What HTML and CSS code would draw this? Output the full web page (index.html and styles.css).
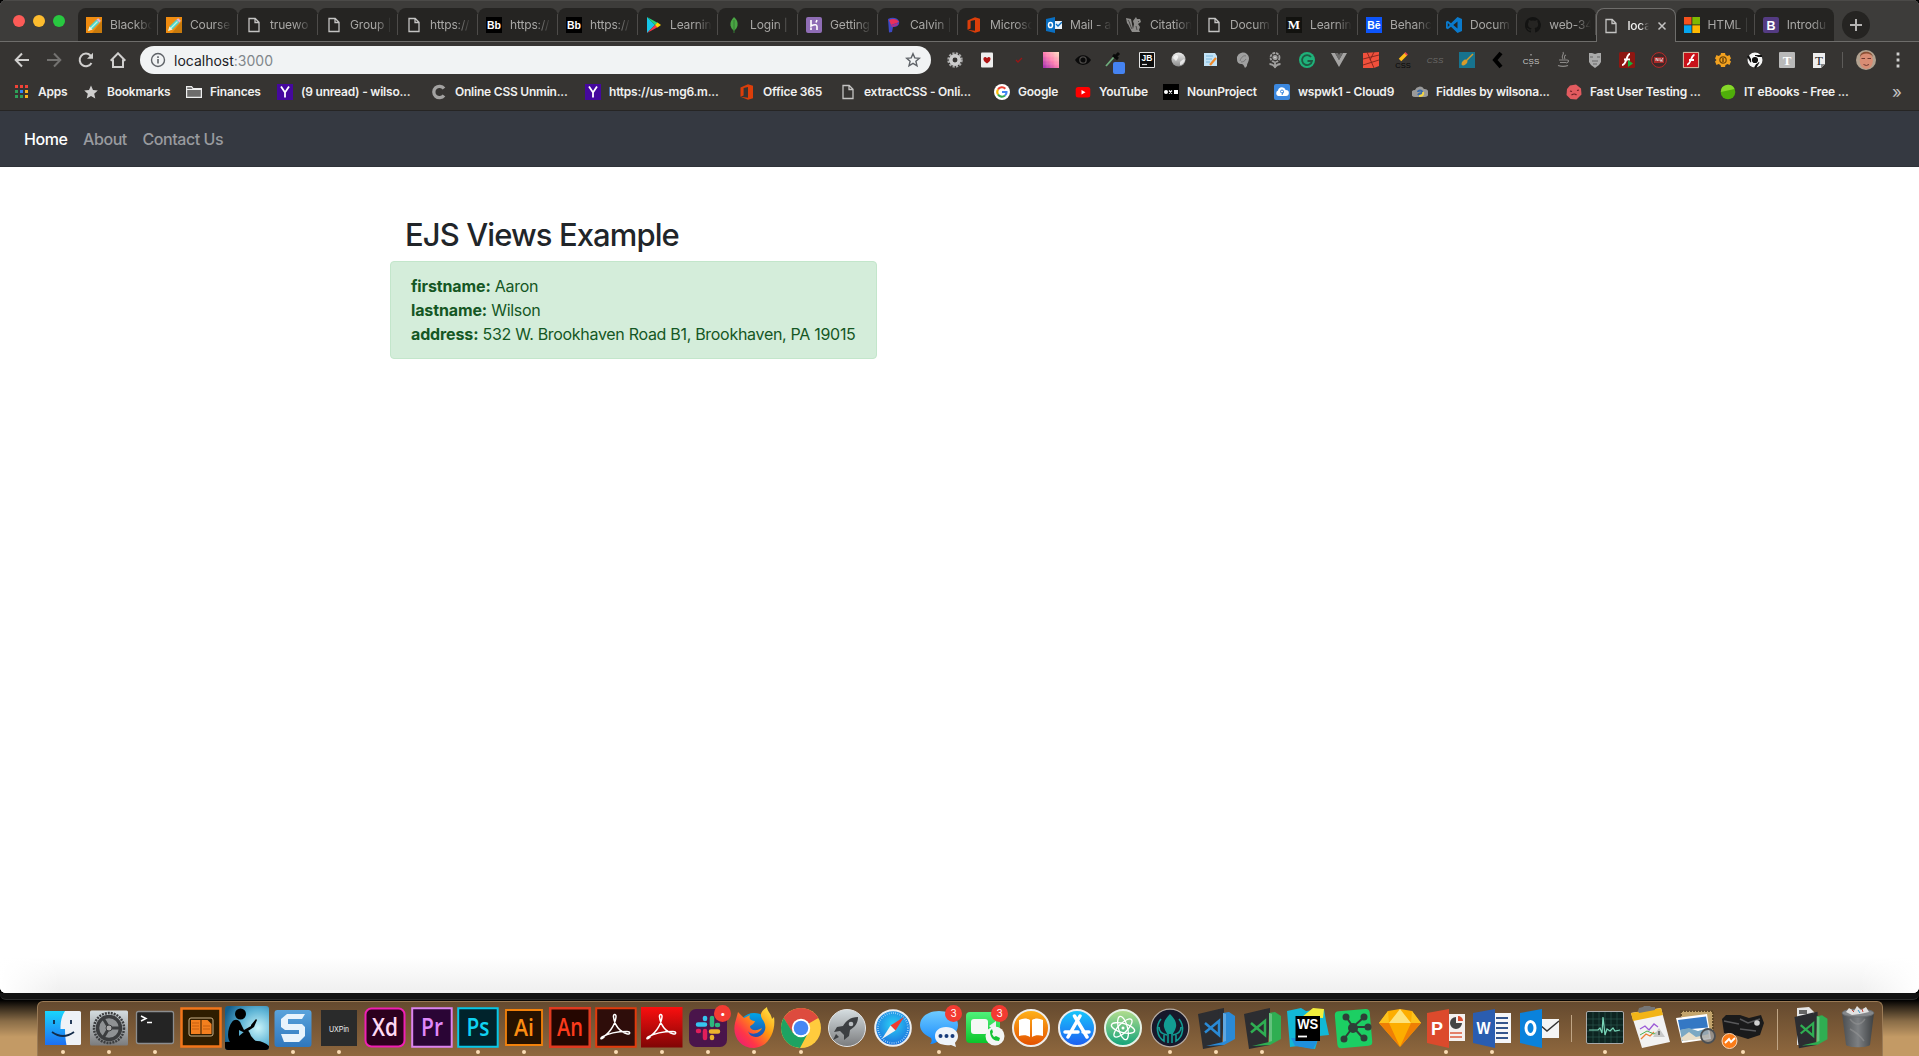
FILE: index.html
```html
<!DOCTYPE html>
<html lang="en">
<head>
<meta charset="utf-8">
<title>localhost:3000</title>
<link rel="stylesheet" href="styles.css">
</head>
<body>
<svg class="defs" aria-hidden="true">
  <defs>
    <linearGradient id="g-finder" x2="0" y2="1"><stop stop-color="#1ad5fd"/><stop offset="1" stop-color="#1d6ff2"/></linearGradient>
    <linearGradient id="g-silver" x2="0" y2="1"><stop stop-color="#d5dde0"/><stop offset="1" stop-color="#7b7c7e"/></linearGradient>
    <linearGradient id="g-snag" x2="0" y2="1"><stop stop-color="#5aa3dc"/><stop offset="1" stop-color="#2f77bd"/></linearGradient>
    <linearGradient id="g-red" x2="0" y2="1"><stop stop-color="#fa0f0f"/><stop offset="1" stop-color="#800505"/></linearGradient>
    <radialGradient id="g-kindle" cx=".75" cy=".5" r=".8"><stop stop-color="#c9f3f8"/><stop offset=".5" stop-color="#5fb5d6"/><stop offset="1" stop-color="#135f8e"/></radialGradient>
    <linearGradient id="g-fox" x1="1" y1="0" x2="0" y2="1"><stop stop-color="#fff44f"/><stop offset=".4" stop-color="#ff980e"/><stop offset=".7" stop-color="#ff3647"/><stop offset="1" stop-color="#e31587"/></linearGradient>
    <linearGradient id="g-globe" x2="0" y2="1"><stop stop-color="#00a6e8"/><stop offset="1" stop-color="#292f9a"/></linearGradient>
    <radialGradient id="g-safari" cx=".5" cy=".4" r=".6"><stop stop-color="#2bd0f5"/><stop offset="1" stop-color="#1b6fdd"/></radialGradient>
    <linearGradient id="g-msg" x2="0" y2="1"><stop stop-color="#6ecbff"/><stop offset="1" stop-color="#1688fb"/></linearGradient>
    <linearGradient id="g-face" x2="0" y2="1"><stop stop-color="#4ff27a"/><stop offset="1" stop-color="#0bc52b"/></linearGradient>
    <linearGradient id="g-books" x2="0" y2="1"><stop stop-color="#ffb31a"/><stop offset="1" stop-color="#e34f00"/></linearGradient>
    <linearGradient id="g-store" x2="0" y2="1"><stop stop-color="#19c8fb"/><stop offset="1" stop-color="#1d5df2"/></linearGradient>
    <linearGradient id="g-atom" x2="0" y2="1"><stop stop-color="#b5de8e"/><stop offset="1" stop-color="#11a37a"/></linearGradient>
    <linearGradient id="g-steel" x2="1" y2="0"><stop stop-color="#4b4e51"/><stop offset=".5" stop-color="#7d8083"/><stop offset="1" stop-color="#3d4042"/></linearGradient>
    <linearGradient id="g-purple" x1="0" y1="1" x2="1" y2="0"><stop stop-color="#a02bb0"/><stop offset=".5" stop-color="#ff7fb0"/><stop offset="1" stop-color="#ffe3c4"/></linearGradient>
    <linearGradient id="g-gloss" x2="0" y2="1"><stop stop-color="#eee"/><stop offset="1" stop-color="#8a8a8a"/></linearGradient>

    <symbol id="i-file" viewBox="0 0 16 16"><path d="M3 1.500h6.200L13 5.300v9.200H3zM9 1.500v4h4" fill="none" stroke="#c4c3c2" stroke-width="1.300"/></symbol>
    <symbol id="i-pencil" viewBox="0 0 16 16"><path fill="#f08c10" d="M0 0h16v16H0z"/><path fill="#c97a0c" d="M16 4v12H6z"/><path d="M2 14l1.500-4.500L10.500 2.500l3 3L6.500 12.500z" fill="#4fd3c4"/><path d="M4.500 11.500l7-7" stroke="#b6f5e6" stroke-width="1.200"/><path d="M10.500 2.500l1.700-1.300 2.600 2.600-1.300 1.700z" fill="#d9b3e8"/><path d="M2 14l1.500-4.500 3 3z" fill="#fff0d0"/></symbol>
    <symbol id="i-bb" viewBox="0 0 16 16"><path d="M0 0h16v16H0z"/><text x="8" y="11.500" class="g sans" font-size="10.500" font-weight="700" fill="#fff">Bb</text></symbol>
    <symbol id="i-office" viewBox="0 0 16 16"><path fill="#dc3e0a" d="M1.500 3.500L9 .3l5 1.500v12.500L9 15.800l-7.500-3 7.500 1V3L4.600 4v7.500L1.500 12.800z"/></symbol>
    <symbol id="i-yahoo" viewBox="0 0 16 16"><path fill="#45089e" d="M0 0h16v16H0z"/><path d="M4 2.500l4 6 4-6M8 8.500v5" fill="none" stroke="#fff" stroke-width="1.800"/></symbol>
    <symbol id="vsc" viewBox="0 0 46 46"><path d="M5 9l21-5v34l5 2-21 4z" fill="#2c2d31"/><path d="M26 4l5-1v5l-2 30-6 3z" fill="#2c2d31"/><path d="M30 8l6-1 6 4v23l-11 6-18 1 17-4z" fill="currentColor"/><path d="M30 8l3 1v27l-3 1z" fill="#fff" opacity=".25"/><path d="M12 18l14 12V16L12 27.500" fill="none" stroke="currentColor" stroke-width="2.500"/></symbol>
    <symbol id="acro" viewBox="0 0 46 46"><path d="M8 33c7-3 14-12 15-21 .4-3.500-3-3-2.500 0 1 8 6 15 14 17 3 .5 3-2.500-.5-2.500-9 0-19 2-25 5.500-2 1.500-1 2.500 1 1z" fill="none" stroke="#fff" stroke-width="1.500"/></symbol>
  </defs>
</svg>

<div class="window">
<header class="browser">
  <div class="tabstrip">
    <div class="lights"><i class="red"></i><i class="amber"></i><i class="green"></i></div>
    <div class="tabs">
      <div class="tab"><svg><use href="#i-pencil"/></svg><span>Blackbo</span></div>
      <div class="tab"><svg><use href="#i-pencil"/></svg><span>Course</span></div>
      <div class="tab"><svg><use href="#i-file"/></svg><span>truewo</span></div>
      <div class="tab"><svg><use href="#i-file"/></svg><span>Group |</span></div>
      <div class="tab"><svg><use href="#i-file"/></svg><span>https://</span></div>
      <div class="tab"><svg><use href="#i-bb"/></svg><span>https://</span></div>
      <div class="tab"><svg><use href="#i-bb"/></svg><span>https://</span></div>
      <div class="tab"><svg viewBox="0 0 16 16"><path fill="#16c5e8" d="M1 0v16l8-8z"/><path fill="#26d07c" d="M1 0l11 6-3 2z"/><path fill="#f4374b" d="M1 16l11-6-3-2z"/><path fill="#ffd400" d="M11.500 5.500L15 8l-3.500 2.500L9 8z"/></svg><span>Learnin</span></div>
      <div class="tab"><svg viewBox="0 0 16 16"><path fill="#4aa544" d="M8 0c3 3 4 5 3.500 8.500C11 11 9.500 12.500 8 14 6.500 12.500 5 11 4.500 8.500 4 5 5.500 3 8 0z"/><path d="M8 3v13" stroke="#357a32" stroke-width="1"/></svg><span>Login |</span></div>
      <div class="tab"><svg viewBox="0 0 16 16"><rect width="16" height="16" rx="2" fill="#8f6db5"/><path d="M5 3v6c4-2 6-1.500 6 .5V13M11 3l-1 2.500M5 10.500V13" stroke="#fff" stroke-width="1.600" fill="none"/></svg><span>Getting</span></div>
      <div class="tab"><svg viewBox="0 0 16 16"><path d="M2 2c4-2 9-1.500 11 2 1 4-2 6-6 6l-1 5-3 .5z" fill="#3d49c4"/><path d="M3 3c4-2 8-1 10 2L5 8z" fill="#e8305a"/><path d="M4 9l7-3 1 2-5 2z" fill="#b52c86"/></svg><span>Calvin |</span></div>
      <div class="tab"><svg><use href="#i-office"/></svg><span>Microso</span></div>
      <div class="tab"><svg viewBox="0 0 16 16"><path fill="#0a6fc2" d="M0 2l9-2v16l-9-2z"/><path fill="#e9f2fa" d="M9 4h7v8H9z"/><path d="M10 7l2 2 4-4" stroke="#0a6fc2" fill="none" stroke-width="1.300"/><ellipse cx="4.500" cy="8" rx="2" ry="2.600" fill="none" stroke="#fff" stroke-width="1.500"/></svg><span>Mail - a</span></div>
      <div class="tab"><svg viewBox="0 0 16 16"><path fill="#8d8c8a" d="M0 1l5 1 1 5 1 5 1-5-1-3 3-4 1 2h3l1 3-3 2 2 3-1 3 1 2H6C4 12 3 8 1 6z"/><path d="M2 3c2 2 2 6 4 9M12 4l1 1M10 9l1 4" stroke="#4b4a49" fill="none"/></svg><span>Citation</span></div>
      <div class="tab"><svg><use href="#i-file"/></svg><span>Docum</span></div>
      <div class="tab"><svg viewBox="0 0 16 16"><path fill="#12120f" d="M0 0h16v16H0z"/><text x="8" y="12.200" class="g serif" font-size="13" font-weight="700" fill="#fff">M</text></svg><span>Learnin</span></div>
      <div class="tab"><svg viewBox="0 0 16 16"><path fill="#0d55fb" d="M0 0h16v16H0z"/><text x="8" y="12" class="g sans" font-size="10.500" font-weight="700" fill="#fff">Bē</text></svg><span>Behanc</span></div>
      <div class="tab narrow"><svg viewBox="0 0 16 16"><path fill="#0a7acc" d="M11.500 0L16 2v12l-4.500 2L5 9.800 1.800 12.200 0 11.300V4.700l1.800-.9L5 6.200zM11.500 4.500L7.300 8l4.200 3.500zM1.800 6v4l2-2z"/></svg><span>Docum</span></div>
      <div class="tab narrow"><svg viewBox="0 0 16 16"><path fill="#131312" d="M8 0a8 8 0 0 0-2.600 15.600c.4 0 .6-.2.6-.500v-1.500c-2.500.5-3-1-3-1-.4-1-1-1.300-1-1.300-.8-.6 0-.6 0-.6 1 .1 1.400.9 1.400.9.800 1.400 2.100 1 2.600.8.100-.600.300-1 .600-1.200C4.800 11 3 10.300 3 7.300c0-.900.300-1.600.800-2.200-.1-.200-.4-1 .1-2.100 0 0 .7-.2 2.200.8a8 8 0 0 1 4 0c1.500-1 2.200-.8 2.200-.8.400 1.100.200 1.900.100 2.100.5.600.8 1.300.8 2.200 0 3-1.900 3.700-3.700 3.900.3.300.6.800.6 1.500v2.300c0 .300.200.600.600.500A8 8 0 0 0 8 0z"/></svg><span>web-34</span></div>
      <div class="tab narrow active"><svg><use href="#i-file"/></svg><span>loca</span><svg class="close" viewBox="0 0 10 10"><path d="M1.500 1.500l7 7M8.500 1.500l-7 7" stroke="#c4c3c2" stroke-width="1.500"/></svg></div>
      <div class="tab narrow"><svg viewBox="0 0 16 16"><path fill="#f6511d" d="M0 0h7.500v7.500H0z"/><path fill="#7fb901" d="M8.300 0H16v7.500H8.300z"/><path fill="#05a5ef" d="M0 8.300h7.500V16H0z"/><path fill="#feb902" d="M8.300 8.300H16V16H8.300z"/></svg><span>HTML |</span></div>
      <div class="tab narrow last"><svg viewBox="0 0 16 16"><rect width="16" height="16" rx="2" fill="#543b82"/><text x="8" y="12.500" class="g sans" font-size="12.500" font-weight="700" fill="#fff">B</text></svg><span>Introdu</span></div>
    </div>
    <div class="newtab"><svg viewBox="0 0 28 28"><path d="M14 8v12M8 14h12" stroke="#b5b4b3" stroke-width="2"/></svg></div>
  </div>

  <div class="toolbar">
    <div class="navbtns">
      <svg viewBox="0 0 16 16"><path d="M15 8H2M8 1.500L1.700 8 8 14.500" class="ln"/></svg>
      <svg viewBox="0 0 16 16" class="dim"><path d="M1 8h13M8 1.500L14.300 8 8 14.500" class="ln"/></svg>
      <svg viewBox="0 0 16 16"><path d="M13.500 11A6.300 6.300 0 1 1 12.500 3.500L14 5" class="ln"/><path d="M15 .8v6H9z" fill="#d0cfce"/></svg>
      <svg viewBox="0 0 16 16"><path d="M.7 8.700L8 1.300l7.300 7.400M3 7.500V15h10V7.500" class="ln"/></svg>
    </div>
    <div class="omnibox">
      <svg viewBox="0 0 16 16"><circle cx="8" cy="8" r="6.500" fill="none" stroke="#5f6368" stroke-width="1.400"/><path d="M8 7v4.500M8 4.200v1.700" stroke="#5f6368" stroke-width="1.600"/></svg>
      <p>localhost<span>:3000</span></p>
      <svg viewBox="0 0 16 16" class="star"><path d="M8 1.700l1.800 4.200 4.600.4-3.500 3 1.100 4.500L8 11.400l-4 2.400 1.100-4.500-3.500-3 4.600-.4z" fill="none" stroke="#5f6368" stroke-width="1.400"/></svg>
    </div>
    <div class="exts">
      <svg viewBox="0 0 16 16"><circle cx="8" cy="8" r="6.500" fill="none" stroke="#aaa" stroke-width="2.500" stroke-dasharray="2.200 1.200"/><circle cx="8" cy="8" r="4.200" fill="none" stroke="#ccc" stroke-width="3.500"/></svg>
      <svg viewBox="0 0 16 16"><rect x="2" y=".5" width="12" height="15" rx="1" fill="#eee"/><path d="M8 11.500C2.500 8 4.500 4.500 6.500 5L8 6l1.500-1c2-.5 4 3-1.500 6.500z" fill="#b01414"/></svg>
      <svg viewBox="0 0 16 16"><path d="M5 8l2 2 4-4" stroke="#9a1515" fill="none" stroke-width="1.300"/></svg>
      <svg viewBox="0 0 16 16"><path fill="url(#g-purple)" d="M0 0h16v16H0z"/><path d="M0 4h16M0 8h16M0 12h16M4 0v16M8 0v16M12 0v16" stroke="#fff" stroke-opacity=".15" stroke-width=".6"/></svg>
      <svg viewBox="0 0 16 16"><path d="M0 8c4-6.500 12-6.500 16 0-4 6.500-12 6.500-16 0z" fill="#0a0a0a"/><circle cx="8" cy="8" r="3.200" fill="none" stroke="#4a4846" stroke-width="1.300"/></svg>
      <svg viewBox="0 0 16 16"><path d="M-1 14l8-9" stroke="#6fae7d" stroke-width="1.800"/><path d="M6 3l5 4M8 5l4-4" stroke="#090909" stroke-width="3"/><rect x="6" y="10" width="12" height="12" rx="2" fill="#4583f2"/></svg>
      <svg viewBox="0 0 16 16"><path fill="#0d0d0d" stroke="#e5e5e5" d="M.5.500h15v15H.5z"/><text x="8" y="9" class="g sans" font-size="8.500" font-weight="700" fill="#fff">JB</text><path d="M3 12.500h5" stroke="#ddd" stroke-width="1.200"/></svg>
      <svg viewBox="0 0 16 16"><circle cx="7.500" cy="7.500" r="7" fill="url(#g-gloss)"/><path d="M2 6c2-4 4-3 5-2s-1 4-2 5zm7 4c2-2 4-4 5-2-1 3-3 5-5 5z" fill="#fff" opacity=".7"/></svg>
      <svg viewBox="0 0 16 16"><path d="M1 1h11l2 3v10H1z" fill="#c3e3f7"/><path d="M3 4h7M3 7h6M3 10h4" stroke="#7bb8dc"/><path d="M7 13l6-7" stroke="#f08c2e" stroke-width="2.200"/></svg>
      <svg viewBox="0 0 16 16"><path d="M2 7a6 6 0 1 1 12-1c0 4-2 5-2 8l-2 2c-1-2-1-3-3-4C4 12 2 11 2 7z" fill="#a0a0a0"/><path d="M5 9c1-4 4-6 6-5M6 10c2 0 4-1 5-3" stroke="#777" fill="none"/></svg>
      <svg viewBox="0 0 16 16"><g fill="none" stroke="#a09f9e" stroke-width="1.800"><circle cx="8" cy="5.500" r="4.500" stroke-dasharray="2.800 .8"/><circle cx="8" cy="5.500" r="1.700" fill="#ddd"/><path d="M8 10v6M2.500 12c2.500 0 4 1 5.500 3 1.500-2 3-3 5.500-3"/></g></svg>
      <svg viewBox="0 0 16 16"><circle cx="8" cy="8" r="8" fill="#1fb27a"/><path d="M12 5a5 5 0 1 0 1 4H8.500" fill="none" stroke="#1e5b43" stroke-width="1.800"/></svg>
      <svg viewBox="0 0 16 16"><path d="M0 1h4l4 7 4-7h4L8 15z" fill="#a5a4a3"/><path d="M4 1h3l1 2 1-2h3L8 8z" fill="#6b6a69"/></svg>
      <svg viewBox="0 0 16 16"><path fill="#f0503c" d="M0 1l16-1v14l-5 2H0z"/><path d="M0 7l16-4M4 0l7 16M0 13l16-5M11 0L7 8" stroke="#7d251c" stroke-width=".9"/></svg>
      <svg viewBox="0 0 16 16"><path d="M5 8l6-6" stroke="#ffbe19" stroke-width="3.500"/><path d="M10.500 2.500l1.200-1.200" stroke="#e84855" stroke-width="3.500"/><text x="8" y="16" class="g sans" font-size="7.500" fill="#080808">CSS</text></svg>
      <svg viewBox="0 0 16 16"><text x="8" y="11" class="g sans" font-size="8" font-style="italic" fill="#6c6a68">CSS</text></svg>
      <svg viewBox="0 0 16 16"><path fill="#17738e" d="M0 0h16v16H0z"/><path d="M3 13l5-5 6-6" stroke="#d79b2b" stroke-width="1.500"/><ellipse cx="5.500" cy="10.500" rx="3.300" ry="2.200" fill="#d79b2b" transform="rotate(-45 5.500 10.500)"/></svg>
      <svg viewBox="0 0 16 16"><path d="M10 1L4 8l6 7" fill="none" stroke="#000" stroke-width="4"/></svg>
      <svg viewBox="0 0 16 16"><text x="8" y="11.500" class="g sans" font-size="8" fill="#c8c7c6">CSS</text><path d="M8 2v1.500M8 13v1.500" stroke="#c8c7c6"/></svg>
      <svg viewBox="0 0 16 16"><path d="M8 0c2 3-3 4 0 7M11 3c-2 1-2 2-1 4M4 8h8M5 10.500h6M3 13.500c3 1 7 1 10 0M12 8c3 0 1 3-1 3" fill="none" stroke="#8c8a88" stroke-width="1.100"/></svg>
      <svg viewBox="0 0 16 16"><path d="M2 1h3l3 1 3-1h3v9l-2 3-4 3-4-3-2-3z" fill="#aaa"/><path d="M3 5h3M10 5h3M5 9h6M6 12h4" stroke="#666"/></svg>
      <svg viewBox="0 0 16 16"><rect width="16" height="16" rx="1.500" fill="#8d1712"/><path d="M11 2C7 2 8 13 3 13M5 7.500h6" fill="none" stroke="#fff" stroke-width="2"/><path d="M9 8l5 3.500-5 3.500z" fill="#17b13b"/></svg>
      <svg viewBox="0 0 16 16"><circle cx="8" cy="8" r="7.400" fill="#3e2827" stroke="#b82a2a"/><path fill="#ad2a2a" d="M3 5h10v6H3z"/><path d="M5 9V6l2 3V6M9 6v3h3M12 6l-2 3" stroke="#ddd" fill="none" stroke-width=".9"/></svg>
      <svg viewBox="0 0 16 16"><path fill="#c9131a" stroke="#eec" stroke-width=".8" d="M.4.400h15.200v15.200H.4z"/><path d="M11.500 3C8 3 8 12.500 4 12.500M6 8h5" fill="none" stroke="#fff" stroke-width="1.800"/></svg>
      <svg viewBox="0 0 16 16"><path d="M6 1h4l.5 2 2 1 2-1L16 6.500 14.500 8 16 9.500 14.500 13l-2-1-2 1L10 15H6l-.5-2-2-1-2 1L0 9.500 1.500 8 0 6.500 1.500 3l2 1 2-1z" fill="#f2a11f"/><circle cx="8" cy="8" r="3.200" fill="none" stroke="#704709" stroke-width="1.200"/><path d="M8 6v4" stroke="#704709" stroke-width="1.500"/></svg>
      <svg viewBox="0 0 16 16"><circle cx="8" cy="8" r="7.500" fill="#f5f5f5"/><path d="M8 4h7M4.500 10L1 4M11.500 10L8 16" stroke="#111" stroke-width="2.200"/><circle cx="8" cy="8" r="4" fill="#fff"/><circle cx="8" cy="8" r="3.100" fill="#111"/></svg>
      <svg viewBox="0 0 16 16"><rect width="16" height="16" rx="1" fill="#b9b9b9"/><text x="8" y="12.500" class="g serif" font-size="13" font-weight="700" fill="#fff">T</text></svg>
      <svg viewBox="0 0 16 16"><path d="M2 1h12v11l-4 4H2z" fill="#eee"/><path d="M14 12h-4v4z" fill="#888"/><text x="8" y="12.500" class="g serif" font-size="13" fill="#222">T</text></svg>
    </div>
    <div class="profile">
      <svg viewBox="0 0 20 20"><circle cx="10" cy="10" r="10" fill="#b2a290"/><ellipse cx="10.300" cy="10.500" rx="6.600" ry="8.500" fill="#d98d74"/><path d="M4 7c0-7 12-7 13 0-2-4-10-5-13 0z" fill="#8a5035"/><path d="M5.500 8.500h3.500M11.500 8.500H15M7.500 14.500q3 2 5.500 0" stroke="#6d3a30" fill="none"/></svg>
    </div>
    <svg class="kebab" viewBox="0 0 4 16"><path d="M2 .5v3M2 6.500v3M2 12.500v3" stroke="#d0cfce" stroke-width="2.800"/></svg>
  </div>

  <div class="bookmarks">
    <a><svg viewBox="0 0 16 16"><path d="M1 1h3v3H1zM6 1h3v3H6zM11 1h3v3h-3z" fill="#f04338"/><path d="M1 6h3v3H1zM1 11h3v3H1zM6 11h3v3H6z" fill="#2fa158"/><path d="M6 6h3v3H6z" fill="#2f86f6"/><path d="M11 6h3v3h-3zM11 11h3v3h-3z" fill="#f9b31c"/></svg>Apps</a>
    <a><svg viewBox="0 0 16 16"><path d="M8 1.500l2 4.500 4.800.5-3.600 3.200 1.100 4.800L8 12l-4.300 2.500 1.100-4.800L1.200 6.500 6 6z" fill="#d0cfce"/></svg>Bookmarks</a>
    <a><svg viewBox="0 0 16 16"><path d="M.6 13.400V2.600h5l1.500 2h8.300v8.800z" fill="#6d6c6b" stroke="#eee" stroke-width="1.200"/><path d="M.6 5.500h15" stroke="#eee"/></svg>Finances</a>
    <a><svg><use href="#i-yahoo"/></svg>(9 unread) - wilso...</a>
    <a><svg viewBox="0 0 16 16"><path d="M13 4.500A5.700 5.700 0 1 0 13 11.500" fill="none" stroke="#a3a2a1" stroke-width="3.300"/></svg>Online CSS Unmin...</a>
    <a><svg><use href="#i-yahoo"/></svg>https://us-mg6.m...</a>
    <a><svg><use href="#i-office"/></svg>Office 365</a>
    <a><svg><use href="#i-file"/></svg>extractCSS - Onli...</a>
    <a><svg viewBox="0 0 16 16"><circle cx="8" cy="8" r="8" fill="#fff"/><g fill="none" stroke-width="2.100"><path d="M4 5.500A4.600 4.600 0 0 1 11.300 4.700" stroke="#ea4335"/><path d="M4 5.500a4.600 4.600 0 0 0 0 5" stroke="#fbbc05"/><path d="M4 10.500a4.600 4.600 0 0 0 7 1" stroke="#34a853"/><path d="M11 11.500c1.300-1 1.600-2.200 1.500-3.500H8" stroke="#4285f4"/></g></svg>Google</a>
    <a><svg viewBox="0 0 16 16"><rect x=".7" y="3" width="14.600" height="10.500" rx="2.500" fill="#f00"/><path d="M6.500 6v4.500l4-2.200z" fill="#fff"/></svg>YouTube</a>
    <a><svg viewBox="0 0 16 16"><path d="M0 0h16v16H0z"/><circle cx="3" cy="8" r="2" fill="#fff"/><path d="M6 6.500l3 3m0-3l-3 3" stroke="#fff" stroke-width="1.200"/><path d="M11 6h4v4h-4z" fill="#fff"/></svg>NounProject</a>
    <a><svg viewBox="0 0 16 16"><rect width="16" height="16" rx="2" fill="#3b87de"/><path d="M4 12a3 3 0 0 1 0-5.500A4 4 0 0 1 11.700 6 3 3 0 0 1 12 12z" fill="#fff"/><circle cx="8" cy="7.500" r="1.500" fill="none" stroke="#3b87de"/><path d="M9.500 7.500L8 11" stroke="#3b87de"/></svg>wspwk1 - Cloud9</a>
    <a><svg viewBox="0 0 16 16"><path d="M3 13a3.500 3.500 0 0 1 0-7 5 5 0 0 1 9-1 4 4 0 0 1 1 8z" fill="#9a9a9a"/><path d="M6 8c0-2 4-2 4 0s-3 1-4 3" stroke="#3a6aa8" stroke-width="2" fill="none"/><path d="M11 8c1 3-1 4-4 4" stroke="#f2d544" stroke-width="2" fill="none"/></svg>Fiddles by wilsona...</a>
    <a><svg viewBox="0 0 16 16"><path d="M4 1.500L10 .5l5 4 .5 6-5 5-6-.5L.5 11 1 5z" fill="#e35b5f"/><path d="M4 7l2 .5M11 6.500l2-.5M5.500 11q3-2 5 0" stroke="#6a2026" fill="none" stroke-width="1.200"/></svg>Fast User Testing ...</a>
    <a><svg viewBox="0 0 16 16"><circle cx="8" cy="8" r="7.300" fill="#4fae0a"/><path d="M.8 8A7.200 7.200 0 0 1 14.500 5z" fill="#86d72a"/></svg>IT eBooks - Free ...</a>
    <span class="more">»</span>
  </div>
</header>

<nav class="navbar">
  <a class="current">Home</a>
  <a>About</a>
  <a>Contact Us</a>
</nav>

<main>
  <h1>EJS Views Example</h1>
  <div class="alert">
    <p><strong>firstname:</strong> Aaron</p>
    <p><strong>lastname:</strong> Wilson</p>
    <p><strong>address:</strong> <span>532 W. Brookhaven Road B1, Brookhaven, PA 19015</span></p>
  </div>
</main>
</div>

<footer class="desktop">
  <div class="behind"></div>
  <div class="dock">
    <div class="app on"><svg viewBox="0 0 46 46"><rect x="5" y="6" width="36" height="34" rx="1.500" fill="#eef2f7"/><path d="M5 6h20c-4 6-4.500 12-4.500 18H25c0 6 .5 11 1.500 16H5z" fill="url(#g-finder)"/><path d="M14 15v4M31 15v4" stroke="#122b4a" stroke-width="1.800"/><path d="M12 27q11 8 22 0" fill="none" stroke="#122b4a" stroke-width="1.800"/></svg></div>
    <div class="app on"><svg viewBox="0 0 46 46"><rect x="4" y="5.500" width="38" height="35" rx="1.500" fill="url(#g-silver)"/><circle cx="23" cy="23" r="15" fill="none" stroke="#3b3d3f" stroke-width="2.500" stroke-dasharray="2 1"/><circle cx="23" cy="23" r="11.500" fill="#8f9294" stroke="#3b3d3f" stroke-width="3.500"/><path d="M23 23H35M23 23l-6-10M23 23l-6 10" stroke="#3b3d3f" stroke-width="3"/><circle cx="23" cy="23" r="3" fill="#aaa" stroke="#3b3d3f"/></svg></div>
    <div class="app on"><svg viewBox="0 0 46 46"><rect x="4.500" y="6.500" width="37" height="32" rx="2" fill="#242424" stroke="#8b8d8f" stroke-width="1.300"/><path d="M9 11l5 2.500L9 16M15 17.500h5" fill="none" stroke="#fff" stroke-width="1.500"/></svg></div>
    <div class="app"><svg viewBox="0 0 46 46"><path d="M3.500 3.500h39v38h-39z" fill="#2e1d00" stroke="#f2761a" stroke-width="2.500"/><rect x="11" y="13" width="24" height="18" rx="2" fill="#2e1d00" stroke="#c9b28a"/><path d="M13 15h9.500v14H13zM23.500 15h6l4 4v10h-10z" fill="#f47f1e"/><path d="M14 18h7M14 21h7M14 24h7M25 21h7M25 24h7" stroke="#a84b08" stroke-width=".6"/></svg></div>
    <div class="app"><svg viewBox="0 0 46 46"><rect x="1" y="1" width="44" height="44" rx="3" fill="url(#g-kindle)"/><path d="M1 37c12 0 22-3 32-1 4 0 9 2 12 5v1a3 3 0 0 1-3 3H4a3 3 0 0 1-3-3z"/><circle cx="16.500" cy="9" r="5.500"/><path d="M8 17c3-4 8-2 9 2l3 6 7-4v-1l5-6 1 1-3 7-9 6-6-3 0 6 6-5c3-2 4 0 6 5l6 7H7C2 34 4 22 8 17z"/></svg></div>
    <div class="app on"><svg viewBox="0 0 46 46"><rect x="4.500" y="5" width="37" height="37" rx="3" fill="url(#g-snag)"/><path d="M35 9H17l-6 5v8l4 3h14v4H11l3 8h15l6-6v-9l-3-3H18v-5h14z" fill="#e8f3fc"/></svg></div>
    <div class="app on"><svg viewBox="0 0 46 46"><path d="M5 5h36v36H5z" fill="#2a2b2b"/><text x="23" y="26.500" class="g sans" font-size="9.500" textLength="20" lengthAdjust="spacingAndGlyphs" fill="#eee">UXPin</text></svg></div>
    <div class="app"><svg viewBox="0 0 46 46"><rect x="3.500" y="3.500" width="39" height="38" rx="6" fill="#2d001e" stroke="#f01fb3" stroke-width="2"/><text x="23" y="31" class="g cond" font-size="25" textLength="26" lengthAdjust="spacingAndGlyphs" fill="#ffd9f4">Xd</text></svg></div>
    <div class="app"><svg viewBox="0 0 46 46"><path d="M3.200 3.200h39.500v38.500H3.200z" fill="#2a0535" stroke="#dc83f0" stroke-width="2"/><text x="23" y="31" class="g cond" font-size="25" textLength="22" lengthAdjust="spacingAndGlyphs" fill="#e089fa">Pr</text></svg></div>
    <div class="app on"><svg viewBox="0 0 46 46"><path d="M3.200 3.200h39.500v38.500H3.200z" fill="#00232c" stroke="#06c8e8" stroke-width="2"/><text x="23" y="31" class="g cond" font-size="25" textLength="23" lengthAdjust="spacingAndGlyphs" fill="#10d3f2">Ps</text></svg></div>
    <div class="app on"><svg viewBox="0 0 46 46"><path d="M5 5h36v35H5z" fill="#271200" stroke="#f3820b" stroke-width="1.800"/><text x="23" y="30.500" class="g cond" font-size="23" textLength="20" lengthAdjust="spacingAndGlyphs" fill="#fb8d12">Ai</text></svg></div>
    <div class="app"><svg viewBox="0 0 46 46"><path d="M3.200 3.200h39.500v38.500H3.200z" fill="#250600" stroke="#df3a20" stroke-width="2.500"/><text x="23" y="31" class="g cond" font-size="25" textLength="26" lengthAdjust="spacingAndGlyphs" fill="#fb3b1c">An</text></svg></div>
    <div class="app on"><svg viewBox="0 0 46 46"><path d="M3.200 3.200h39.500v38.500H3.200z" fill="#2e0d0a" stroke="#e13a0c" stroke-width="2"/><use href="#acro" width="46" height="46"/></svg></div>
    <div class="app on"><svg viewBox="0 0 46 46"><path d="M2 2h41.500v40.500H2z" fill="url(#g-red)"/><use href="#acro" width="46" height="46"/></svg></div>
    <div class="app on"><svg viewBox="0 0 46 46"><rect x="4" y="4" width="38" height="38" rx="7" fill="#4a154b"/><g stroke-width="4.500" stroke-linecap="round"><path d="M20 13v1M13 19.500h7" stroke="#36c5f0"/><path d="M27 13v7M33 20h-1" stroke="#2eb67d"/><path d="M26 26.500h7M27 32v1" stroke="#ecb22e"/><path d="M20 26v7M13 26h1" stroke="#e01e5a"/></g></svg><em>•</em></div>
    <div class="app on"><svg viewBox="0 0 46 46"><circle cx="23" cy="24" r="16" fill="url(#g-globe)"/><path d="M7 7l6 6 6-3c-2 4 2 6 5 6-1 4-5 4-5 6 2 5 9 3 12 1-3 7-12 7-14 3 2 8 14 8 17-1 2-8-5-11-4-16 1-4 4-5 6-7 0 4 4 6 5 12l2-2c2 12-4 30-20 31C9 43 1 31 4 18z" fill="url(#g-fox)"/></svg></div>
    <div class="app on"><svg viewBox="0 0 46 46"><circle cx="23" cy="23" r="20" fill="#ffcb3d"/><path d="M23 23L5.700 13a20 20 0 0 1 34.600 0z" fill="#dd4b3e"/><path d="M5.700 13l8.700 15L23 14h18z" fill="#dd4b3e"/><path d="M5.700 13A20 20 0 0 0 22 43l8-15H15z" fill="#1ea362"/><circle cx="23" cy="23" r="9.200" fill="#fff"/><circle cx="23" cy="23" r="7.300" fill="#4687f4"/></svg></div>
    <div class="app"><svg viewBox="0 0 46 46"><circle cx="23" cy="23" r="18.500" fill="url(#g-silver)" stroke="#e3e4e5"/><path d="M34 12c-8 0-12 4-15 9l-6 1-3 5 6-1 4 4 0 5 5-4 1-6c5-3 8-7 8-13zM12 29l-3 6 6-3z" fill="#3c3f42"/><circle cx="27" cy="19" r="2.300" fill="#b8bdc0"/></svg></div>
    <div class="app"><svg viewBox="0 0 46 46"><circle cx="23" cy="23" r="17.800" fill="url(#g-safari)" stroke="#eceff1" stroke-width="2"/><circle cx="23" cy="23" r="15" fill="none" stroke="#c5eaff" stroke-width="1.800" stroke-dasharray=".6 1.600"/><path d="M34 12L20.500 20.500l5 5z" fill="#f03b30"/><path d="M12 34l8.500-13.500 5 5z" fill="#f3f3f3"/></svg></div>
    <div class="app on"><svg viewBox="0 0 46 46"><path d="M23 6c11 0 19 6 19 14s-8 15-18 15c-3 2-6 4-10 4 2-2 2-4 1-6-6-3-11-7-11-13C4 12 12 6 23 6z" fill="url(#g-msg)"/><path d="M30 22c7 0 12 4 12 9 0 4-2 5-3 7l1 4-5-2c-9 1-16-2-16-9 0-5 4-9 11-9z" fill="#eef3f9"/><g fill="#173b7a"><circle cx="24.500" cy="31" r="2"/><circle cx="30.500" cy="31" r="2"/><circle cx="36.500" cy="31" r="2"/></g></svg><em>3</em></div>
    <div class="app"><svg viewBox="0 0 46 46"><rect x="4" y="7" width="34" height="31" rx="4" fill="url(#g-face)"/><rect x="9" y="14" width="17" height="15" rx="3" fill="#f5f8f5"/><path d="M27 21l7-5v11z" fill="#eee"/><circle cx="33" cy="31" r="9.500" fill="#f3f5f4"/><path d="M28 26c0 7 4 10 9 10l1-3-4-2-2 1-2-3 1-2-1-3z" fill="#16c336"/></svg><em>3</em></div>
    <div class="app"><svg viewBox="0 0 46 46"><circle cx="23" cy="23" r="18" fill="url(#g-books)" stroke="#eee" stroke-width="2"/><path d="M11 15c4-2 8-2 11 0v17c-3-2-7-2-11-1zM24 15c3-2 7-2 11 0v16c-4-1-8-1-11 1z" fill="#fff"/></svg></div>
    <div class="app"><svg viewBox="0 0 46 46"><circle cx="23" cy="23" r="18" fill="url(#g-store)" stroke="#eee" stroke-width="2"/><path d="M26 11L14 32M20.500 11L33 32M11 27h13M29 27h6" stroke="#fff" stroke-width="3.500" stroke-linecap="round"/></svg></div>
    <div class="app"><svg viewBox="0 0 46 46"><circle cx="23" cy="23" r="18" fill="url(#g-atom)" stroke="#e6f2e6" stroke-width="2"/><g fill="none" stroke="#fff" stroke-width="1.300"><ellipse cx="23" cy="23" rx="4.500" ry="12" transform="rotate(-15 23 23)"/><ellipse cx="23" cy="23" rx="4.500" ry="12" transform="rotate(45 23 23)"/><ellipse cx="23" cy="23" rx="4.500" ry="12" transform="rotate(105 23 23)"/></g><circle cx="23" cy="23" r="1.500" fill="#fff"/></svg></div>
    <div class="app on"><svg viewBox="0 0 46 46"><circle cx="23" cy="23" r="18.800" fill="#17192b" stroke="#b4aaa2" stroke-width="1.200"/><path d="M23 9c4 4 7 8 6 13-1 4-2 4-3 7h-6c-1-3-2-3-3-7-1-5 2-9 6-13z" fill="#129c93"/><path d="M14 14c-6 7-4 18 3 22V30M32 14c6 7 4 18-3 22V30M12 22c0 5 3 7 8 8M34 22c0 5-3 7-8 8M21 29v9M25 29v9" fill="none" stroke="#129c93" stroke-width="1.600"/></svg></div>
    <div class="app on blue"><svg><use href="#vsc"/></svg></div>
    <div class="app on lime"><svg><use href="#vsc"/></svg></div>
    <div class="app"><svg viewBox="0 0 46 46"><path d="M2 6l14-3 5 3 18-2 2 12 3 14-10 1-4 13-17-3-8 1z" fill="#12b8d6"/><path d="M17 12L28 3l11 1-1 9z" fill="#f3ee3c"/><path d="M6 33l24 0 2 4-4 7-18-3z" fill="#1f90dc"/><path d="M10.500 11H35v25H10.500z"/><text x="22.700" y="24" class="g sans" font-size="14" font-weight="700" textLength="21" lengthAdjust="spacingAndGlyphs" fill="#fff">WS</text><path d="M13 31.500h9" stroke="#fff" stroke-width="1.800"/></svg></div>
    <div class="app"><svg viewBox="0 0 46 46"><rect x="5" y="5" width="35" height="37" rx="4" fill="#1ccf63" transform="rotate(-5 23 23)"/><g stroke="#2f3f38" stroke-width="2" fill="#2f3f38"><path d="M22 22l-6-9M22 22l10-9M22 22l15 0M22 22l-9 12M22 22l10 11"/><circle cx="15" cy="12" r="2.500"/><circle cx="33" cy="12" r="2.500"/><circle cx="37" cy="22" r="2.500"/><circle cx="13" cy="34" r="2.500"/><circle cx="33" cy="33" r="2.500"/><circle cx="22" cy="23" r="4"/></g></svg></div>
    <div class="app"><svg viewBox="0 0 46 46"><path d="M11 6l12-2 12 2 9 12-21 24L2 18z" fill="#fdad00"/><path d="M2 18h10l11 24zM44 18H34L23 42z" fill="#ef7f05"/><path d="M11 6l1 12H2zM35 6l-1 12h10z" fill="#fdc21d"/><path d="M12 18L23 4l11 14z" fill="#fde27c"/></svg></div>
    <div class="app on"><svg viewBox="0 0 46 46"><path d="M24 9h18v27H24z" fill="#f4f0ee"/><path d="M33 12a6 6 0 1 0 6 6h-6z" fill="#444"/><path d="M35 11v5h5a5 5 0 0 0-5-5z" fill="#dd4d2e"/><path d="M27 28h12M27 32h12" stroke="#dd5b3e" stroke-width="1.500"/><path d="M4 8l22-4v39L4 38z" fill="#dc4a2c"/><text x="14" y="30" class="g sans" font-size="18" font-weight="700" fill="#fff">P</text></svg></div>
    <div class="app on"><svg viewBox="0 0 46 46"><path d="M24 8h18v30H24z" fill="#f5f6f8"/><path d="M27 13h12M27 18h12M27 23h12M27 28h12M27 33h12" stroke="#33558d" stroke-width="1.800"/><path d="M4 8l22-4v39L4 38z" fill="#2a5db0"/><text x="14.500" y="29" class="g sans" font-size="17" font-weight="700" textLength="14" lengthAdjust="spacingAndGlyphs" fill="#fff">W</text></svg></div>
    <div class="app"><svg viewBox="0 0 46 46"><path d="M24 14h19v19H24z" fill="#f5f5f5"/><path d="M24 20l7 6 12-10" fill="none" stroke="#333" stroke-width="1.500"/><path d="M4 8l22-4v39L4 38z" fill="#0a82dc"/><ellipse cx="14.500" cy="23" rx="4.500" ry="6.500" fill="none" stroke="#fff" stroke-width="3"/></svg></div>
    <div class="rule short"></div>
    <div class="app on"><svg viewBox="0 0 46 46"><rect x="4.500" y="6.500" width="37" height="32" rx="1.500" fill="#0d2421" stroke="#a9a9a9"/><path d="M5 14h36M5 20h36M5 26h36M5 32h36M11 7v31M17 7v31M23 7v31M29 7v31M35 7v31" stroke="#2b5b50" stroke-width=".6"/><path d="M7 25h9l2-2 2 5 1-16 2 18 2-6 3 2 3-3 2 3 5-1" fill="none" stroke="#79d6b8" stroke-width="1.200"/></svg></div>
    <div class="app"><svg viewBox="0 0 46 46"><path d="M3 8l30-5 9 34-28 6z" fill="#f2f2f2"/><path d="M3 8l30-5 2 7-30 6z" fill="#f2b417"/><path d="M10 6l1-3 4-1 1-1h6l1 1h4v3l-16 3z" fill="#777"/><path d="M12 24l5-3 4 4 5-6 4 3" fill="none" stroke="#9c5bd6" stroke-width="1.300"/><path d="M13 34l5-5 4 2 4-4" fill="none" stroke="#ee7d35" stroke-width="1.300"/><path d="M12 30l7-4 7 3 4-2" fill="none" stroke="#4caf50"/><path d="M31 23l6 9H25z" fill="#c9c9c9"/><path d="M31 26v4" stroke="#222"/></svg></div>
    <div class="app"><svg viewBox="0 0 46 46"><path d="M7 6h32v20H7z" fill="#c3a56c" stroke="#5f4726" stroke-width="2" stroke-dasharray="2 1"/><path d="M2 13l31-4 4 25-29 4z" fill="#fff"/><path d="M4 15l28-3.500 2 11L6 25z" fill="#3478c4"/><path d="M6 25l9-2 9 3 10-3 1 9-27 4z" fill="#7ba9c4"/><path d="M7 33l8-6 7 5 13-3v4L9 36z" fill="#e8dfc9"/><circle cx="34" cy="31" r="7" fill="#a0a4a8" fill-opacity=".7" stroke="#4b4f53" stroke-width="1.800"/></svg></div>
    <div class="app on"><svg viewBox="0 0 46 46"><path d="M2 14l4-4h14l9 3 12-3 3 8-4 12-12 4-13-4-11-2z" fill="#1a1a1b"/><path d="M4 16l15 3M20 14l8 4 12-4M20 24l16 2" stroke="#58585a" fill="none" stroke-width="1.500"/><circle cx="37" cy="18" r="2.800" fill="#d0d0d0"/><circle cx="9.500" cy="36" r="7.500" fill="#fb7c18" stroke="#fbd8b8"/><path d="M5 38l4-4 2 3 4-4" fill="none" stroke="#fff" stroke-width="1.800"/></svg></div>
    <div class="rule"></div>
    <div class="app lime"><svg viewBox="0 0 46 46"><path d="M8 3l12-1 6 6v32H8z" fill="#e6e6e6"/><path d="M10 5h8v4h-8z" fill="#666"/><use href="#vsc" x="1" y="4" width="41" height="41"/></svg></div>
    <div class="app"><svg viewBox="0 0 46 46"><path d="M7 8l32 0-4 32c-3 3-21 3-24 0z" fill="url(#g-steel)"/><ellipse cx="23" cy="8" rx="16" ry="4" fill="#85888b" stroke="#6a6d70"/><path d="M11 7l3-4 5 3 3-5 4 4 5-3 3 5-9 2-8 1z" fill="#e2e2e2"/><path d="M17 5l2 2M27 4l1 3" stroke="#c9443a"/><path d="M23 5l2 3" stroke="#3a9bc9"/><path d="M15 14q8 10 15 0M15 24q9 5 14 12" fill="none" stroke="#999" stroke-opacity=".5" stroke-width="1.500"/></svg></div>
  </div>
</footer>
</body>
</html>
```
FILE: styles.css
```css
* { box-sizing: border-box; }
body {
  margin: 0;
  width: 1919px;
  height: 1056px;
  overflow: hidden;
  display: flex;
  flex-direction: column;
  background: #000;
  color: #212529;
  font-family: "Inter", "Liberation Sans", sans-serif;
}
p, h1 { margin: 0; }
svg { display: block; flex: none; }
.defs { position: absolute; width: 0; height: 0; }
.g { text-anchor: middle; }
.sans { font-family: "Liberation Sans", sans-serif; }
.serif { font-family: "Liberation Serif", serif; }
.cond { font-family: "Open Sans", sans-serif; font-weight: 600; }

.window {
  height: 993px;
  flex: none;
  display: flex;
  flex-direction: column;
  border-radius: 6px;
  overflow: hidden;
  background: #fff;
}

/* Tab strip */
.browser { flex: none; height: 111px; background: #363432; border-bottom: 1px solid #262524; }
.tabstrip {
  height: 42px;
  display: flex;
  background: #3d3c3a;
  border-top: 1px solid #4b4a48;
  border-bottom: 1px solid #6e6d6b;
}
.lights { width: 78px; padding: 14px 0 0 13px; display: flex; gap: 8px; }
.lights i { width: 12px; height: 12px; border-radius: 50%; }
.red { background: #fc5b57; }
.amber { background: #fdbc2e; }
.green { background: #28c840; }
.tabs { display: flex; padding-top: 7px; }
.tab {
  width: 80px;
  height: 33px;
  display: flex;
  align-items: center;
  gap: 8px;
  padding-left: 8px;
  border-radius: 8px 8px 0 0;
  background: linear-gradient(#4d4b49, #4d4b49) right 6px / 1px 21px no-repeat #252422;
}
.tab svg { width: 16px; height: 16px; }
.tab span {
  width: 42px;
  overflow: hidden;
  white-space: nowrap;
  font-size: 12px;
  line-height: 18px;
  letter-spacing: -.15px;
  color: #a8a7a5;
  -webkit-mask-image: linear-gradient(90deg, #000 60%, transparent);
  mask-image: linear-gradient(90deg, #000 60%, transparent);
}
.tab.narrow { width: 79.2px; }
.tab.active {
  height: 34px;
  padding-left: 6px;
  background: #363432;
  border: 1px solid #6e6d6b;
  border-bottom: 0;
}
.tab.active span { width: 22px; color: #f0efee; font-weight: 500; }
.tab .close { width: 10px; height: 10px; }
.tab.last { background: #252422; }
.newtab { width: 28px; height: 28px; margin: 10px 0 0 8px; border-radius: 50%; background: #252422; }

/* Address row */
.toolbar { height: 36px; display: flex; align-items: center; padding-left: 14px; }
.navbtns { display: flex; gap: 16px; width: 126px; }
.navbtns svg { width: 16px; height: 16px; }
.ln { fill: none; stroke: #d0cfce; stroke-width: 2; }
.dim { opacity: .4; }
.omnibox {
  width: 791px;
  height: 28px;
  display: flex;
  align-items: center;
  padding: 0 10px;
  border-radius: 14px;
  background: #f1f3f4;
}
.omnibox svg { width: 16px; height: 16px; }
.omnibox p { flex: 1; padding-left: 8px; font-size: 14px; letter-spacing: 0; color: #202124; }
.omnibox p span { color: #80868b; }
.exts { display: flex; gap: 16px; margin-left: 16px; }
.exts svg { width: 16px; height: 16px; overflow: visible; }
.profile { margin-left: 15px; padding-left: 13px; border-left: 1px solid #5d5b59; height: 16px; display: flex; align-items: center; }
.profile svg { width: 20px; height: 20px; }
.kebab { width: 4px; height: 16px; margin-left: 20px; }

.bookmarks {
  height: 27px;
  display: grid;
  grid-template-columns: 69px 103px 91px 154px 154px 154px 101px 154px 81px 88px 111px 138px 154px 154px 172px auto;
  align-items: center;
  padding-left: 14px;
}
.bookmarks a { display: flex; align-items: center; gap: 8px; font-size: 12px; font-weight: 600; letter-spacing: -.22px; white-space: nowrap; color: #f0f0ef; }
.bookmarks svg { width: 16px; height: 16px; }
.more { font-size: 17px; line-height: 20px; color: #c4c3c2; }

/* Page */
.navbar { flex: none; height: 56px; display: flex; align-items: center; gap: 15.5px; padding: 1px 0 0 24px; background: #353941; border-bottom: 1px solid #2e3238; }
.navbar a { font-size: 16px; font-weight: 500; letter-spacing: -.42px; color: #999b9f; }
.navbar .current { color: #fff; }
main {
  flex: 1;
  padding: 49px 0 0 390px;
  background:
    linear-gradient(90deg, #fff, transparent 60px, transparent calc(100% - 60px), #fff),
    linear-gradient(#fff, #fff calc(100% - 36px), #efefef);
}
h1 { padding-left: 15px; margin-bottom: 7px; font-size: 31px; line-height: 38px; font-weight: 500; letter-spacing: -.9px; }
.alert {
  width: 487px;
  padding: 12px 20px;
  border: 1px solid #c3e6cb;
  border-radius: 4px;
  background: #d4edda;
  color: #155724;
  font-size: 16px;
  line-height: 24px;
  letter-spacing: -.3px;
  white-space: nowrap;
}
.alert strong { letter-spacing: -.13px; }

/* Desktop strip and dock */
.desktop {
  flex: 1;
  display: flex;
  flex-direction: column;
  align-items: center;
  background: linear-gradient(#000 7px, rgba(0, 0, 0, .75) 14px, rgba(0, 0, 0, .3) 28px, transparent 44px), #c39a65;
}
.behind { width: 1919px; height: 7px; flex: none; border-radius: 0 0 6px 6px; background: #121212; border-bottom: 1px solid #2b2b2b; }
.dock {
  width: 1846px;
  height: 55px;
  margin-top: 1px;
  display: flex;
  align-items: flex-start;
  padding: 3px 0 0 2px;
  border: 1px solid #9a7a55;
  border-bottom: 0;
  border-radius: 6px 6px 0 0;
  background: linear-gradient(#654a2f, #8f683e);
}
.app { position: relative; width: 46.14px; height: 52px; display: flex; justify-content: center; }
.app svg { width: 46px; height: 46px; }
.app.on::after { content: ""; position: absolute; left: 21px; top: 45px; width: 4px; height: 4px; border-radius: 50%; background: #fbdcb4; }
.app em {
  position: absolute;
  right: 0;
  top: 0;
  width: 17px;
  height: 17px;
  border-radius: 50%;
  background: #f33b32;
  color: #fff;
  font: 10px/17px "Inter", sans-serif;
  text-align: center;
}
.blue { color: #2a8ad6; }
.lime { color: #2fae52; }
.rule { width: 23px; height: 41px; margin-top: 4px; background: linear-gradient(#c0a585, #c0a585) center / 1px 100% no-repeat; }
.rule.short { width: 20px; height: 27px; margin-top: 10px; }
```
